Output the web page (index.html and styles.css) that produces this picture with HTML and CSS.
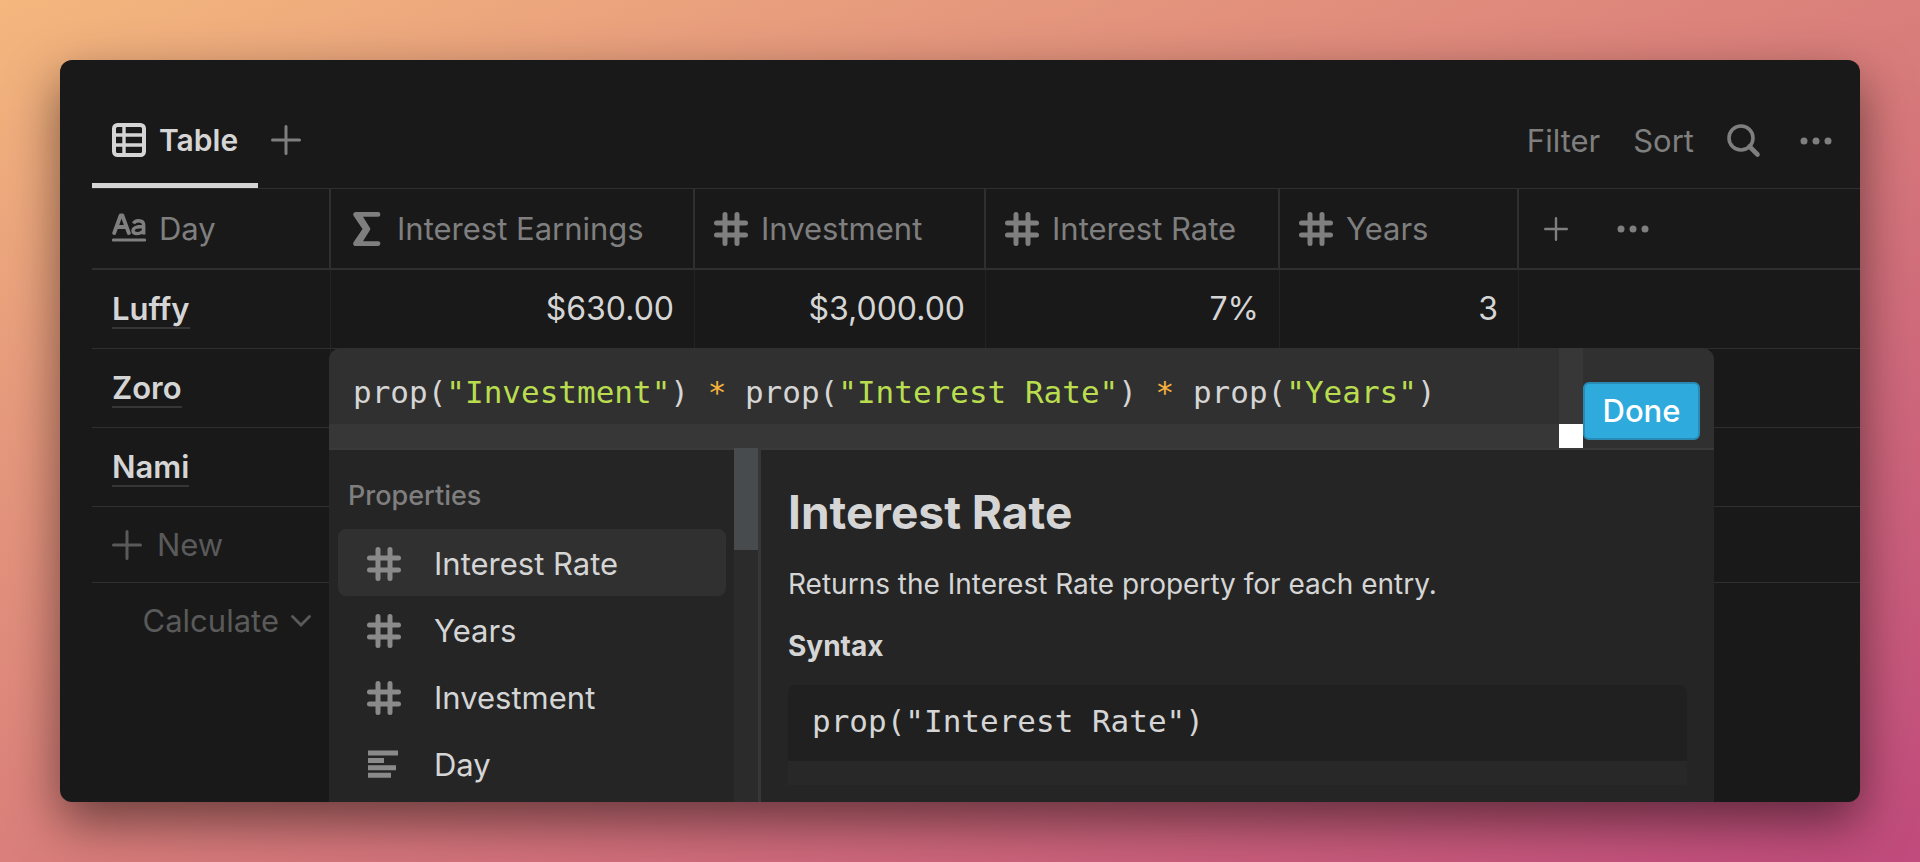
FILE: index.html
```html
<!DOCTYPE html>
<html lang="en">
<head>
<meta charset="utf-8">
<title>Interest table</title>
<link rel="stylesheet" href="styles.css">
</head>
<body>
<svg class="sprite" aria-hidden="true">
  <symbol id="hash" viewBox="0 0 34 34"><path d="M11 2.500v29M23 2.500v29M2.500 11h29M2.500 23h29" fill="none" stroke="currentColor" stroke-width="5" stroke-linecap="round"/></symbol>
  <symbol id="plus" viewBox="0 0 30 30"><path d="M15 1.500v27M1.500 15h27" fill="none" stroke="currentColor" stroke-width="3" stroke-linecap="round"/></symbol>
  <symbol id="dots" viewBox="0 0 32 8"><g fill="currentColor"><circle cx="4" cy="4" r="3.500"/><circle cx="16" cy="4" r="3.500"/><circle cx="28" cy="4" r="3.500"/></g></symbol>
</svg>
<main class="window">
  <header class="toolbar">
    <nav class="tabs">
      <button class="tab">
        <svg class="tab-icon" viewBox="0 0 34 34" aria-hidden="true"><rect x="2" y="2" width="30" height="30" rx="3.500" fill="none" stroke="currentColor" stroke-width="4"/><path d="M2 12h30M2 22h30M12 2v30" stroke="currentColor" stroke-width="3.400" fill="none"/></svg>
        Table
      </button>
      <button class="tab-add" aria-label="Add view"><svg class="plus" aria-hidden="true"><use href="#plus"/></svg></button>
    </nav>
    <div class="actions">
      <button>Filter</button>
      <button>Sort</button>
      <button aria-label="Search"><svg class="search" viewBox="0 0 34 34" aria-hidden="true"><circle cx="14" cy="14" r="12" fill="none" stroke="currentColor" stroke-width="3.600"/><path d="M22.500 22.500l8 8" stroke="currentColor" stroke-width="4.600" stroke-linecap="round"/></svg></button>
      <button aria-label="More"><svg class="dots" aria-hidden="true"><use href="#dots"/></svg></button>
    </div>
  </header>

  <table class="grid">
    <colgroup><col class="c-day"><col class="c-earn"><col class="c-inv"><col class="c-rate"><col class="c-years"><col></colgroup>
    <thead>
      <tr>
        <th><span class="head"><svg class="aa" viewBox="0 0 34 34" aria-hidden="true"><path d="M2.200 21L8.600 3.500h1.800L16.800 21M4.800 15h9.400" fill="none" stroke="currentColor" stroke-width="3.800" stroke-linecap="round" stroke-linejoin="round"/><path d="M21.500 11.500c1-2.200 3-2.800 5-2.800 3.400 0 5.200 1.500 5.200 4.500v9.300M31.700 14.500c-6 0-10.700.7-10.700 4 0 2 1.600 3.100 4 3.100 3.600 0 6.700-2 6.700-5.100" fill="none" stroke="currentColor" stroke-width="3.400"/><path d="M1.500 28h31" stroke="currentColor" stroke-width="3.200" stroke-linecap="round"/></svg>Day</span></th>
        <th><span class="head"><svg class="sigma" viewBox="0 0 28 34" aria-hidden="true"><path d="M3 0h22a2.300 2.300 0 0 1 0 4.800H10l7 11.200a2 2 0 0 1 0 2L10 29.200h15a2.300 2.300 0 0 1 0 4.800H3c-2.500 0-3.500-2-2.300-4L9.500 17 .7 4C-.5 2 .500 0 3 0z" fill="currentColor"/></svg>Interest Earnings</span></th>
        <th><span class="head"><svg class="hash" aria-hidden="true"><use href="#hash"/></svg>Investment</span></th>
        <th><span class="head"><svg class="hash" aria-hidden="true"><use href="#hash"/></svg>Interest Rate</span></th>
        <th><span class="head"><svg class="hash" aria-hidden="true"><use href="#hash"/></svg>Years</span></th>
        <th><span class="head tools"><button aria-label="Add property"><svg class="plus small" aria-hidden="true"><use href="#plus"/></svg></button><button aria-label="More properties"><svg class="dots" aria-hidden="true"><use href="#dots"/></svg></button></span></th>
      </tr>
    </thead>
    <tbody>
      <tr><td><a class="page" href="#">Luffy</a></td><td>$630.00</td><td>$3,000.00</td><td>7%</td><td>3</td><td></td></tr>
      <tr><td><a class="page" href="#">Zoro</a></td><td></td><td></td><td></td><td></td><td></td></tr>
      <tr><td><a class="page" href="#">Nami</a></td><td></td><td></td><td></td><td></td><td></td></tr>
    </tbody>
  </table>
  <div class="new-row"><button class="new"><svg class="plus" aria-hidden="true"><use href="#plus"/></svg>New</button></div>
  <div class="calc-row"><button class="calc">Calculate<svg class="chevron" viewBox="0 0 20 12" aria-hidden="true"><path d="M1.500 1.500l8.500 8.500 8.500-8.500" fill="none" stroke="currentColor" stroke-width="2.800" stroke-linecap="round"/></svg></button></div>

  <section class="popup">
    <div class="formula">
      <div class="editor">
        <code class="code">prop(<span class="str">"Investment"</span>) <span class="op">*</span> prop(<span class="str">"Interest Rate"</span>) <span class="op">*</span> prop(<span class="str">"Years"</span>)</code>
        <span class="bar"></span>
        <span class="bar"></span>
        <span class="corner"></span>
      </div>
      <button class="done">Done</button>
    </div>
    <div class="panes">
      <aside class="props">
        <h3 class="props-title">Properties</h3>
        <ul class="list">
          <li><button class="item active"><svg class="hash" aria-hidden="true"><use href="#hash"/></svg>Interest Rate</button></li>
          <li><button class="item"><svg class="hash" aria-hidden="true"><use href="#hash"/></svg>Years</button></li>
          <li><button class="item"><svg class="hash" aria-hidden="true"><use href="#hash"/></svg>Investment</button></li>
          <li><button class="item"><svg class="hash" viewBox="0 0 34 34" aria-hidden="true"><path d="M1 2.500h30v5H1zM1 10h16v5H1zM1 17.300h28v5H1zM1 24.800h23v5H1z" fill="currentColor"/></svg>Day</button></li>
        </ul>
      </aside>
      <div class="track"><div class="thumb"></div></div>
      <article class="doc">
        <h1>Interest Rate</h1>
        <p>Returns the Interest Rate property for each entry.</p>
        <h2>Syntax</h2>
        <pre class="sample">prop("Interest Rate")</pre>
      </article>
    </div>
  </section>
</main>
</body>
</html>
```
FILE: styles.css
```css
* { box-sizing: border-box; }
body {
  margin: 0;
  min-height: 100vh;
  padding: 60px;
  display: flex;
  background: linear-gradient(to bottom right, #f4b77d 0%, #e6997d 25%, #da7f7b 50%, #c04a7c 100%);
  font-family: Inter, "Liberation Sans", sans-serif;
  font-size: 31px;
  line-height: 40px;
  color: #d5d5d5;
}
.sprite { position: absolute; width: 0; height: 0; }
svg { flex: none; display: block; }
button {
  display: flex;
  align-items: center;
  padding: 0;
  border: 0;
  background: none;
  color: inherit;
  font: inherit;
}
.window {
  position: relative;
  flex: 1;
  overflow: hidden;
  padding: 32px 0 0 32px;
  border-radius: 12px;
  background: #191919;
  box-shadow: 0 20px 50px rgba(0, 0, 0, 0.5);
}
.toolbar {
  display: flex;
  justify-content: space-between;
  height: 97px;
  border-bottom: 1px solid #2f2f2f;
}
.tabs { display: flex; }
.tab {
  gap: 13px;
  padding: 5px 20px 0;
  border-bottom: 5px solid #d5d5d5;
  font-size: 30px;
  font-weight: 600;
}
.tab-icon, .hash, .search, .aa { width: 34px; height: 34px; }
.tab-add { padding-left: 13px; color: #7f7f7f; }
.plus { width: 30px; height: 30px; }
.plus.small { width: 24px; height: 24px; }
.dots { width: 32px; height: 8px; }
.actions {
  display: flex;
  align-items: center;
  gap: 33px;
  padding: 1px 28px 0 0;
  color: #7f7f7f;
}
.search { margin-right: 6px; }
.grid {
  width: 100%;
  table-layout: fixed;
  border-collapse: separate;
  border-spacing: 0;
}
.c-day { width: 239px; }
.c-earn { width: 364px; }
.c-inv { width: 291px; }
.c-rate { width: 294px; }
.c-years { width: 239px; }
th, td { padding: 0 20px; }
th + th { padding-left: 19px; }
th {
  height: 81px;
  border-bottom: 2px solid #2f2f2f;
  border-right: 2px solid #2f2f2f;
  font-weight: 400;
  color: #7f7f7f;
  text-align: left;
}
td {
  height: 79px;
  border-bottom: 1px solid #2f2f2f;
  border-right: 1px solid #242424;
  font-size: 32px;
  text-align: right;
}
td:first-child { text-align: left; }
th:last-child, td:last-child { border-right: 0; }
.head { display: flex; align-items: center; gap: 13px; white-space: nowrap; }
.sigma { width: 28px; height: 34px; margin: 0 3px; }
.tools { gap: 49px; padding-left: 6px; }
.page {
  color: inherit;
  font-size: 31px;
  font-weight: 600;
  text-decoration: none;
  border-bottom: 2px solid #363636;
}
.new-row {
  display: flex;
  height: 76px;
  border-bottom: 1px solid #2f2f2f;
  padding-left: 20px;
  color: #5a5a5a;
}
.new { gap: 15px; }
.calc-row {
  display: flex;
  justify-content: flex-end;
  width: 239px;
  padding: 18px 20px;
  color: #5a5a5a;
}
.calc { gap: 12px; }
.chevron { width: 20px; height: 12px; }
.popup {
  position: absolute;
  top: 288px;
  bottom: 0;
  left: 269px;
  right: 146px;
  display: flex;
  flex-direction: column;
  overflow: hidden;
  border-radius: 12px 12px 0 0;
  background: #252525;
}
.formula {
  display: flex;
  height: 102px;
  border-bottom: 2px solid #3a3a3a;
  background: #303030;
}
.editor {
  flex: 1;
  display: grid;
  grid-template: 1fr 24px / 1fr 24px;
}
.code, .sample {
  font-family: "DejaVu Sans Mono", monospace;
  font-size: 31px;
  line-height: 40px;
  white-space: pre;
}
.code { padding: 24px 0 0 24px; }
.str { color: #b9dd4f; }
.op { color: #f5b23e; }
.bar { background: #373737; }
.corner { background: #fff; }
.done {
  justify-content: center;
  width: 117px;
  height: 58px;
  margin: 34px 14px 0 0;
  border: 2px solid #298bb5;
  border-radius: 6px;
  background: #2eaadc;
  color: #fff;
  font-weight: 500;
}
.panes { flex: 1; display: flex; min-height: 0; }
.props { width: 405px; padding: 26px 8px 0 9px; }
.props-title {
  margin: 0 0 13px;
  padding: 0 10px;
  font-size: 27px;
  line-height: 40px;
  font-weight: 500;
  color: #7f7f7f;
}
.list { margin: 0; padding: 0; list-style: none; }
.item { width: 100%; height: 67px; gap: 33px; padding: 2px 29px 0; border-radius: 8px; }
.item .hash { color: #8a8a8a; }
.item.active { background: #303030; }
.track { width: 27px; border-right: 3px solid #373737; background: #2b2b2b; margin-top: -2px; }
.thumb { height: 102px; background: #474b4e; }
.doc { flex: 1; padding: 30px 27px 0; }
.doc h1 { margin: 0; font-size: 46px; line-height: 64px; font-weight: 700; }
.doc p { margin: 20px 0 22px; font-size: 28px; line-height: 40px; }
.doc h2 { margin: 0 0 19px; font-size: 28px; line-height: 40px; font-weight: 700; }
.sample {
  margin: 0;
  padding: 16px 24px 20px;
  border-bottom: 24px solid #282828;
  border-radius: 8px 8px 0 0;
  background: #202020;
}
```
